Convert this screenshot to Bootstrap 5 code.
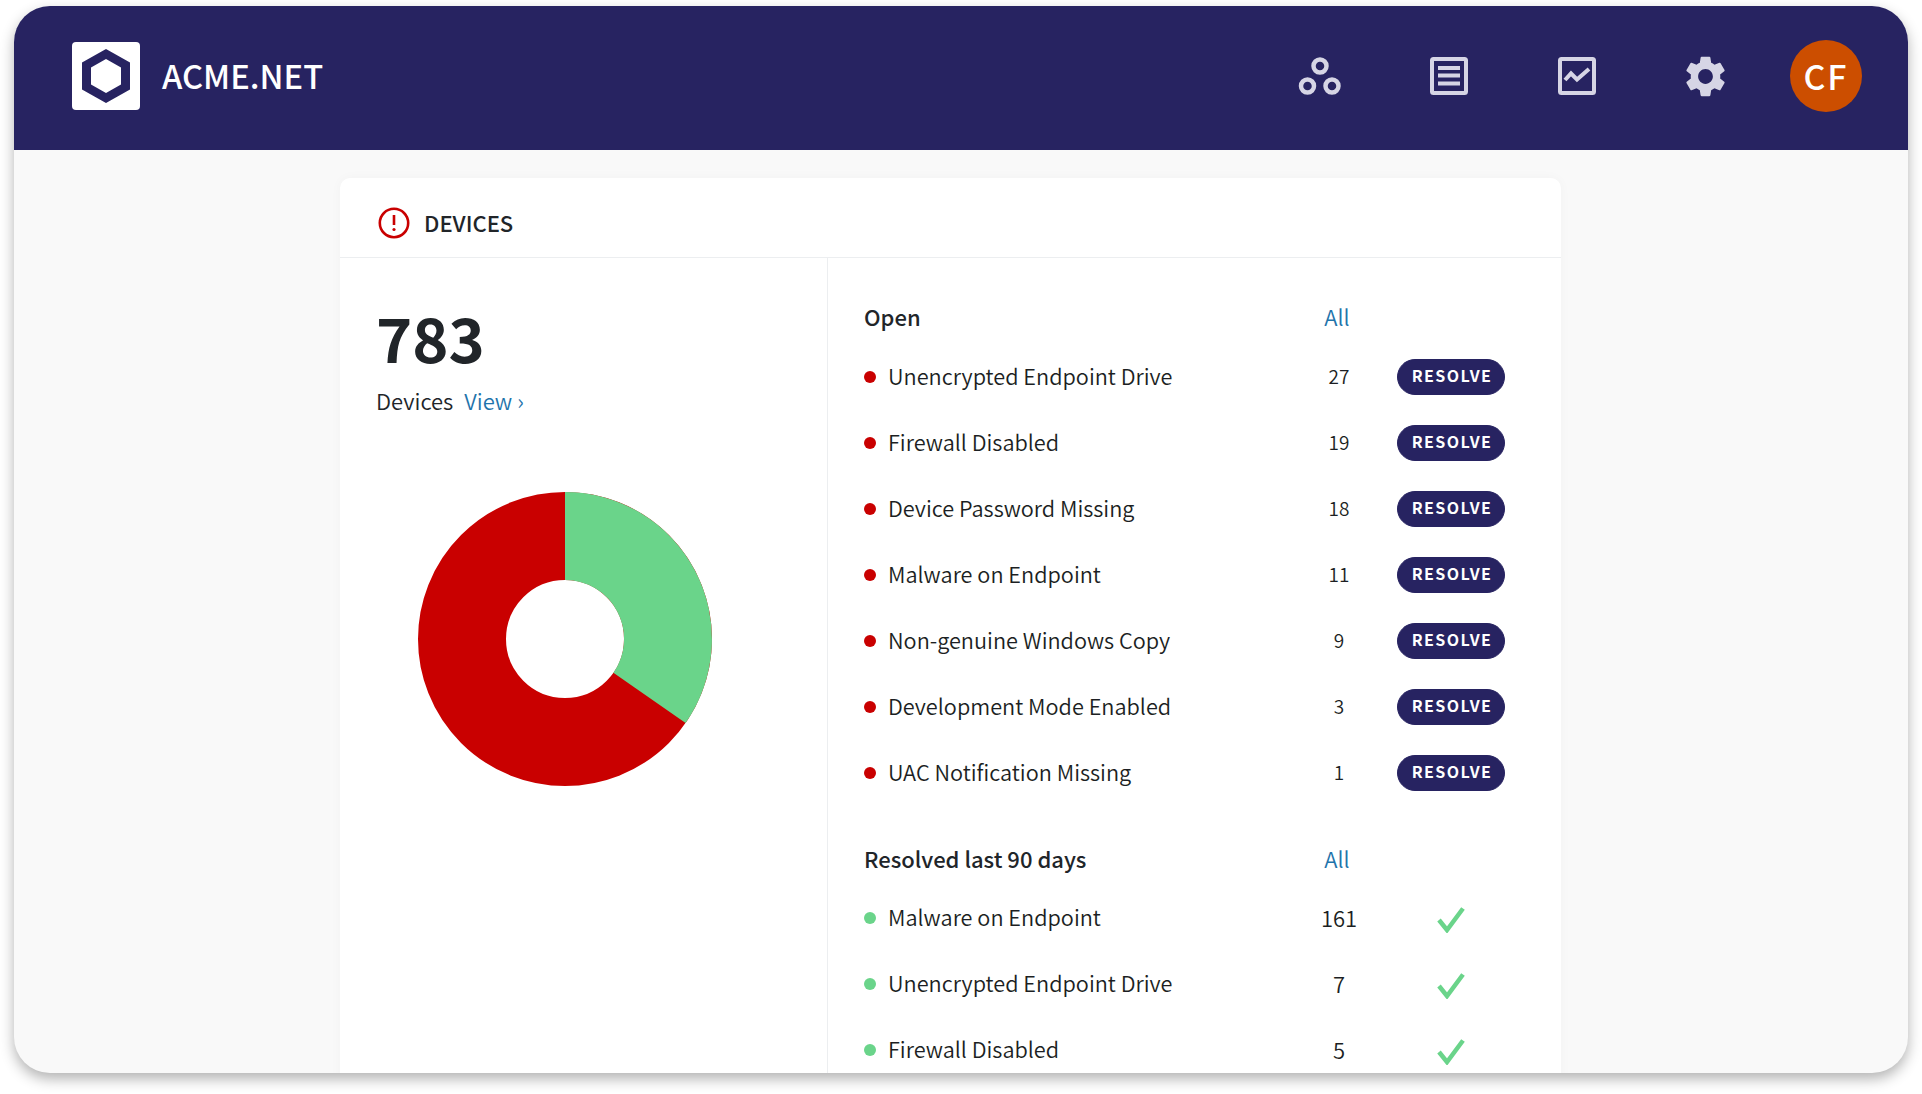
<!DOCTYPE html>
<html lang="en">
<head>
  <meta charset="UTF-8" />
  <meta name="viewport" content="width=device-width, initial-scale=1.0" />
  <title>ACME.NET Devices</title>
  <link href="https://cdn.jsdelivr.net/npm/bootstrap@5.3.0/dist/css/bootstrap.min.css" rel="stylesheet"/>
  <style>
    html, body { height: 100%; background: #fff; }
    body { font-family: "Noto Sans CJK JP", "Noto Sans", sans-serif; color: #212529; padding: 6px 14px 0 14px; overflow: hidden; }
    a { text-decoration: none; color: #1f74ab; }
    .app-frame { height: 1067px; background: #f9f9f9; border-radius: 36px; overflow: hidden; box-shadow: 0 6px 14px rgba(0,0,0,.3); }
    .app-head { height: 144px; background: #272361; padding: 0 46px 4px 58px; }
    .logo-box { width: 68px; height: 68px; background: #fff; border-radius: 4px; }
    .brand-name { color: #fff; font-size: 32.700px; font-weight: 500; margin-left: 22px; line-height: 1; padding-bottom: 2px; }
    .head-icon { display: block; }
    .icon-slot { width: 128.500px; }
    .user-chip { width: 72px; height: 72px; border-radius: 50%; background: #cc4e00; color: #fff; font-size: 34px; font-weight: 500; letter-spacing: 2px; margin-left: 20px; padding-bottom: 2px; }
    .device-panel { width: 1221px; margin: 28px 0 0 326px; background: #fff; border-radius: 10px; box-shadow: 0 0 12px rgba(0,0,0,.03); }
    .panel-top { height: 80px; padding: 10px 0 0 38px; border-bottom: 1px solid #eceef0; }
    .panel-title { font-size: 22px; font-weight: 500; margin-left: 14px; }
    .side-col { width: 488px; padding: 37px 0 0 36px; border-right: 1px solid #eceef0; height: 900px; }
    .big-total { font-size: 61.500px; font-weight: 700; line-height: 1; margin: 11px 0 0 0; }
    .total-sub { font-size: 22px; font-weight: 350; margin-top: 16.500px; }
    .total-sub a { margin-left: 6px; }
    .donut { display: block; margin: 75px 0 0 42px; }
    .list-col { padding: 41px 0 0 36px; }
    .list-head { height: 36px; font-size: 22px; font-weight: 500; padding-bottom: 2px; }
    .list-head a { font-weight: 350; }
    .name-cell { width: 440px; }
    .num-cell { width: 70px; text-align: center; }
    .act-cell { width: 108px; margin-left: 23px; }
    .all-cell { width: 66px; text-align: center; }
    .item-row { height: 66px; font-size: 21.700px; font-weight: 350; color: #1c1f23; }
    .item-row .num-cell { font-size: 19px; }
    .green-row .num-cell { font-size: 22px; }
    .dot { width: 12px; height: 12px; border-radius: 50%; margin: 2px 12px 0 0; flex: none; }
    .dot-red { background: #c90000; }
    .dot-green { background: #6ad48a; }
    .resolve-btn { width: 108px; height: 36px; padding: 0 0 4px 2px; border-radius: 18px; background: #272361; border-color: #272361; color: #fff; font-size: 16px; font-weight: 700; letter-spacing: 1.400px; line-height: 1; }
    .open-rows { margin-top: 8px; }
    .resolved-block { margin-top: 36px; }
    .done-rows { margin-top: 7px; }
  </style>
</head>
<body>
  <div class="app-frame">
    <header class="app-head d-flex align-items-center">
      <div class="logo-box d-flex align-items-center justify-content-center">
        <svg width="50" height="56" viewBox="0 0 50 56"><path fill="#272361" fill-rule="evenodd" d="M25 1 49 14.500V41.500L25 55 1 41.500V14.500ZM25 11 10 19.500V36.500L25 45 40 36.500V19.500Z"/></svg>
      </div>
      <div class="brand-name">ACME.NET</div>
      <div class="ms-auto d-flex align-items-center">
        <div class="icon-slot d-flex justify-content-center">
          <svg class="head-icon" width="44" height="38" viewBox="0 0 44 38" fill="none" stroke="#d6d5e5" stroke-width="4.500"><circle cx="22" cy="9" r="6.500"/><circle cx="9.500" cy="29" r="6.500"/><circle cx="34" cy="29" r="6.500"/></svg>
        </div>
        <div class="icon-slot d-flex justify-content-center">
          <svg class="head-icon" width="38" height="38" viewBox="0 0 38 38" fill="none" stroke="#d6d5e5" stroke-width="4"><rect x="2" y="2" width="34" height="34" rx="1.500"/><path d="M8 11H30M8 18.500H30M8 26.500H30"/></svg>
        </div>
        <div class="icon-slot d-flex justify-content-center">
          <svg class="head-icon" width="38" height="38" viewBox="0 0 38 38" fill="none" stroke="#d6d5e5" stroke-width="4"><rect x="2" y="2" width="34" height="34" rx="1.500"/><path d="M7 23 13 16.500 19 22.500 31 12"/></svg>
        </div>
        <div class="icon-slot d-flex justify-content-center">
          <svg class="head-icon" width="41" height="41" viewBox="2 2 20 20"><path fill="#d6d5e5" d="M19.140 12.940c.04-.3.06-.61.06-.94 0-.32-.02-.64-.07-.94l2.030-1.580c.18-.14.23-.41.12-.61l-1.920-3.320c-.12-.22-.37-.29-.59-.22l-2.390.96c-.5-.38-1.030-.7-1.620-.94l-.36-2.540c-.04-.24-.24-.41-.48-.41h-3.840c-.24 0-.43.17-.47.41l-.36 2.540c-.59.24-1.130.57-1.620.94l-2.390-.96c-.22-.08-.47 0-.59.22L2.740 8.870c-.12.21-.08.47.12.61l2.030 1.580c-.05.3-.09.63-.09.94s.02.64.07.94l-2.030 1.580c-.18.14-.23.41-.12.61l1.920 3.320c.12.22.37.29.59.22l2.390-.96c.5.38 1.030.7 1.620.94l.36 2.540c.05.24.24.41.48.41h3.840c.24 0 .44-.17.47-.41l.36-2.540c.59-.24 1.130-.56 1.620-.94l2.390.96c.22.08.47 0 .59-.22l1.920-3.320c.12-.22.07-.47-.12-.61l-2.010-1.580zM12 15.600c-1.980 0-3.600-1.620-3.600-3.600s1.620-3.600 3.600-3.600 3.600 1.620 3.600 3.600-1.620 3.600-3.600 3.600z"/></svg>
        </div>
        <div class="user-chip d-flex align-items-center justify-content-center">CF</div>
      </div>
    </header>

    <main class="device-panel">
      <div class="panel-top d-flex align-items-center">
        <svg width="32" height="32" viewBox="0 0 32 32"><circle cx="16" cy="16" r="14.200" fill="none" stroke="#c90000" stroke-width="2.600"/><path stroke="#c90000" stroke-width="2.600" d="M16 8v10"/><circle cx="16" cy="22.500" r="1.600" fill="#c90000"/></svg>
        <div class="panel-title">DEVICES</div>
      </div>
      <div class="d-flex">
        <section class="side-col">
          <div class="big-total">783</div>
          <div class="total-sub">Devices <a href="#">View ›</a></div>
          <svg class="donut" width="294" height="294" viewBox="-147 -147 294 294">
            <circle r="103" fill="none" stroke="#c90000" stroke-width="88"/>
            <path fill="#6ad48a" d="M0-147A147 147 0 0 1 120.600 84L48.400 33.800A59 59 0 0 0 0-59Z"/>
          </svg>
        </section>
        <section class="list-col flex-grow-1">
          <div class="list-head d-flex align-items-center">
            <div class="name-cell">Open</div>
            <div class="all-cell"><a href="#">All</a></div>
          </div>
          <div id="open-list" class="open-rows"></div>
          <div class="resolved-block">
            <div class="list-head d-flex align-items-center">
              <div class="name-cell">Resolved last 90 days</div>
              <div class="all-cell"><a href="#">All</a></div>
            </div>
            <div id="done-list" class="done-rows"></div>
          </div>
        </section>
      </div>
    </main>
  </div>

  <script src="https://cdn.jsdelivr.net/npm/bootstrap@5.3.0/dist/js/bootstrap.bundle.min.js"></script>
  <script>
    const openItems = [
      ["Unencrypted Endpoint Drive", 27],
      ["Firewall Disabled", 19],
      ["Device Password Missing", 18],
      ["Malware on Endpoint", 11],
      ["Non-genuine Windows Copy", 9],
      ["Development Mode Enabled", 3],
      ["UAC Notification Missing", 1]
    ];
    const doneItems = [
      ["Malware on Endpoint", 161],
      ["Unencrypted Endpoint Drive", 7],
      ["Firewall Disabled", 5]
    ];
    const check = '<svg width="30" height="26" viewBox="0 0 30 26" fill="none" stroke="#6ad48a" stroke-width="4.500"><path d="M3 13 11 23 27 1.500"/></svg>';

    document.getElementById("open-list").innerHTML = openItems.map(([name, n]) => `
      <div class="item-row d-flex align-items-center">
        <div class="name-cell d-flex align-items-center"><span class="dot dot-red"></span><span>${name}</span></div>
        <div class="num-cell">${n}</div>
        <div class="act-cell"><button class="btn resolve-btn">RESOLVE</button></div>
      </div>`).join("");
    document.getElementById("done-list").innerHTML = doneItems.map(([name, n]) => `
      <div class="item-row green-row d-flex align-items-center">
        <div class="name-cell d-flex align-items-center"><span class="dot dot-green"></span><span>${name}</span></div>
        <div class="num-cell">${n}</div>
        <div class="act-cell text-center">${check}</div>
      </div>`).join("");
  </script>
</body>
</html>
